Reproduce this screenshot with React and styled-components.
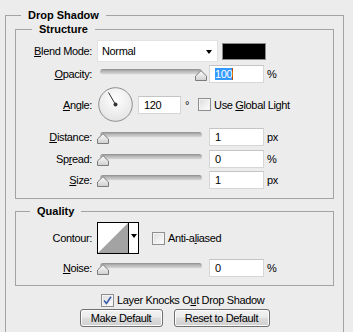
import React from "react"
import styled, { createGlobalStyle } from "styled-components"

const GlobalStyle = createGlobalStyle`
  html, body {
    margin: 0;
    padding: 0;
    background: #ececec;
    overflow: hidden;
  }
  body {
    font-family: "Liberation Sans", Arial, sans-serif;
    font-size: 11px;
    letter-spacing: -0.35px;
    color: #000;
  }
`

const Page = styled.div`
  width: 353px;
  height: 332px;
  padding: 8px 0 0 5px;
  box-sizing: border-box;
  overflow: hidden;
`

const Group = styled.fieldset`
  margin: ${p => p.$mt || 0}px 0 0 0;
  padding: ${p => p.$pt || 0}px ${p => p.$px || 0}px ${p => p.$pb || 0}px;
  border: 1px solid #a3a3a3;
  min-width: 0;
  width: ${p => p.$w}px;
  box-sizing: border-box;
`

const Legend = styled.legend`
  margin-left: ${p => p.$ml || 0}px;
  padding: 0 ${p => p.$pl || 7}px;
  font-weight: bold;
  font-size: 11px;
  letter-spacing: 0;
  line-height: 14px;
  height: 14px;
`

const Row = styled.div`
  display: flex;
  align-items: center;
  height: ${p => p.$h || 18}px;
  margin-top: ${p => p.$mt || 0}px;
  padding-left: ${p => p.$pl || 0}px;
`

const Label = styled.span`
  width: 76px;
  flex: none;
  text-align: right;
  margin-right: 5px;
  white-space: nowrap;
`

const Select = styled.div`
  width: 121px;
  height: 22px;
  box-sizing: border-box;
  background: #fff;
  border: 1px solid #e2e2e2;
  display: flex;
  align-items: center;
  justify-content: space-between;
  padding: 0 5px 0 4px;
`

const Arrow = styled.span`
  width: 0;
  height: 0;
  border-left: 3.5px solid transparent;
  border-right: 3.5px solid transparent;
  border-top: 4px solid #000;
  margin-top: 1px;
`

const Swatch = styled.div`
  width: 44px;
  height: 17px;
  box-sizing: border-box;
  margin-left: 4px;
  background: #000;
  border: 1px solid #8a8a8a;
`

const SliderBox = styled.div`
  position: relative;
  width: 110px;
  height: 18px;
  flex: none;
`

const Track = styled.div`
  position: absolute;
  left: 3px;
  right: 5px;
  top: 4px;
  height: 5px;
  border-radius: 3px;
  background: linear-gradient(#8c8c8c, #b4b4b4 40%, #d6d6d6);
  border-bottom: 1px solid #e8e8e8;
`

const Thumb = styled.svg`
  position: absolute;
  top: 5px;
  width: 12px;
  height: 11px;
`

const Input = styled.div`
  width: ${p => p.$w || 55}px;
  height: 18px;
  box-sizing: border-box;
  background: #fff;
  border: 1px solid #d6d6d6;
  border-top-color: #c4c4c4;
  margin-left: ${p => p.$ml || 2}px;
  padding-left: 5px;
  display: flex;
  align-items: center;
  flex: none;
`

const Selected = styled.span`
  background: #3399ff;
  color: #fff;
  border-right: 1px solid #c05000;
`

const Unit = styled.span`
  margin-left: ${p => p.$ml || 3}px;
`

const Check = styled.span`
  width: 13px;
  height: 13px;
  box-sizing: border-box;
  flex: none;
  border: 1px solid #8e8f8f;
  background: linear-gradient(135deg, #dcdcdc, #fefefe);
  box-shadow: inset 0 0 0 1px #f4f4f4;
  margin-left: ${p => p.$ml || 0}px;
  margin-right: 3px;
  display: flex;
  align-items: center;
  justify-content: center;
`

const Dial = styled.svg`
  width: 35px;
  height: 35px;
  flex: none;
  margin-left: 1px;
`

const ContourBox = styled.div`
  display: flex;
  width: 42px;
  height: 32px;
  box-sizing: border-box;
  border: 1px solid #000;
  background: #fff;
`

const ContourArrow = styled.div`
  flex: 1;
  border-left: 1px solid #000;
  display: flex;
  justify-content: center;
  padding-top: 10px;
`

const Buttons = styled.div`
  display: flex;
  justify-content: center;
  gap: 11px;
  margin-top: 2px;
`

const Button = styled.div`
  width: ${p => p.$w}px;
  height: 18px;
  box-sizing: border-box;
  border: 1px solid #707070;
  border-radius: 3px;
  background: linear-gradient(#f2f2f2 0%, #ebebeb 45%, #dddddd 50%, #cfcfcf 100%);
  box-shadow: inset 0 0 0 1px #fcfcfc;
  display: flex;
  align-items: center;
  justify-content: center;
`

function Slider({ pct }) {
  return (
    <SliderBox>
      <Track />
      <Thumb style={{ left: pct * 0.98 }} viewBox="0 0 12 11">
        <defs>
          <linearGradient id="tg" x1="0" y1="0" x2="0" y2="1">
            <stop offset="0" stopColor="#fdfdfd" />
            <stop offset="1" stopColor="#cfcfcf" />
          </linearGradient>
        </defs>
        <path
          d="M0.5 10.5 V6 L6 0.7 L11.5 6 V10.5 Z"
          fill="url(#tg)"
          stroke="#7c7c7c"
          strokeLinejoin="round"
        />
      </Thumb>
    </SliderBox>
  )
}

export default function App() {
  return (
    <Page>
      <GlobalStyle />
      <Group $w={339} $px={9} $pb={40}>
        <Legend $ml={6}>Drop Shadow</Legend>
        <Group $w={319} $pt={4} $pb={9}>
          <Legend $ml={16}>Structure</Legend>
          <Row $h={22}>
            <Label>
              <u>B</u>lend Mode:
            </Label>
            <Select>
              Normal
              <Arrow />
            </Select>
            <Swatch />
          </Row>
          <Row $mt={3}>
            <Label>
              <u>O</u>pacity:
            </Label>
            <Slider pct={100} />
            <Input>
              <Selected>100</Selected>
            </Input>
            <Unit>%</Unit>
          </Row>
          <Row $h={35} $mt={4}>
            <Label>
              <u>A</u>ngle:
            </Label>
            <Dial viewBox="0 0 35 35">
              <defs>
                <radialGradient id="dg" cx="0.5" cy="0.35" r="0.7">
                  <stop offset="0" stopColor="#ffffff" />
                  <stop offset="1" stopColor="#e2e2e2" />
                </radialGradient>
              </defs>
              <circle cx="17.5" cy="17.5" r="16.8" fill="url(#dg)" stroke="#8d8d8d" />
              <line x1="17.5" y1="17.5" x2="10.5" y2="5.5" stroke="#333" strokeWidth="1" />
              <circle cx="17.5" cy="17.5" r="2" fill="#333" />
            </Dial>
            <Input $w={43} $ml={5}>
              120
            </Input>
            <Unit $ml={4}>°</Unit>
            <Check $ml={9} />
            <span>
              Use <u>G</u>lobal Light
            </span>
          </Row>
          <Row $mt={6}>
            <Label>
              <u>D</u>istance:
            </Label>
            <Slider pct={0} />
            <Input>1</Input>
            <Unit>px</Unit>
          </Row>
          <Row $mt={4}>
            <Label>
              Sp<u>r</u>ead:
            </Label>
            <Slider pct={0} />
            <Input>0</Input>
            <Unit>%</Unit>
          </Row>
          <Row $mt={3}>
            <Label>
              <u>S</u>ize:
            </Label>
            <Slider pct={0} />
            <Input>1</Input>
            <Unit>px</Unit>
          </Row>
        </Group>
        <Group $w={319} $mt={5} $pt={4} $pb={8}>
          <Legend $ml={14}>Quality</Legend>
          <Row $h={32}>
            <Label>Contour:</Label>
            <ContourBox>
              <svg width="30" height="30" viewBox="0 0 30 30">
                <path d="M0 30 L30 0 V30 Z" fill="#a3a3a3" />
              </svg>
              <ContourArrow>
                <Arrow />
              </ContourArrow>
            </ContourBox>
            <Check $ml={13} />
            <span>
              Anti-a<u>l</u>iased
            </span>
          </Row>
          <Row $mt={5}>
            <Label>
              <u>N</u>oise:
            </Label>
            <Slider pct={0} />
            <Input>0</Input>
            <Unit>%</Unit>
          </Row>
        </Group>
        <Row $h={14} $mt={7} $pl={86}>
          <Check>
            <svg width="9" height="9" viewBox="0 0 9 9">
              <path d="M1 4.5 L3.5 7.5 L8 0.8" fill="none" stroke="#3a5ba8" strokeWidth="1.6" />
            </svg>
          </Check>
          <span>
            Layer Knocks O<u>u</u>t Drop Shadow
          </span>
        </Row>
        <Buttons>
          <Button $w={83}>Make Default</Button>
          <Button $w={96}>Reset to Default</Button>
        </Buttons>
      </Group>
    </Page>
  )
}
